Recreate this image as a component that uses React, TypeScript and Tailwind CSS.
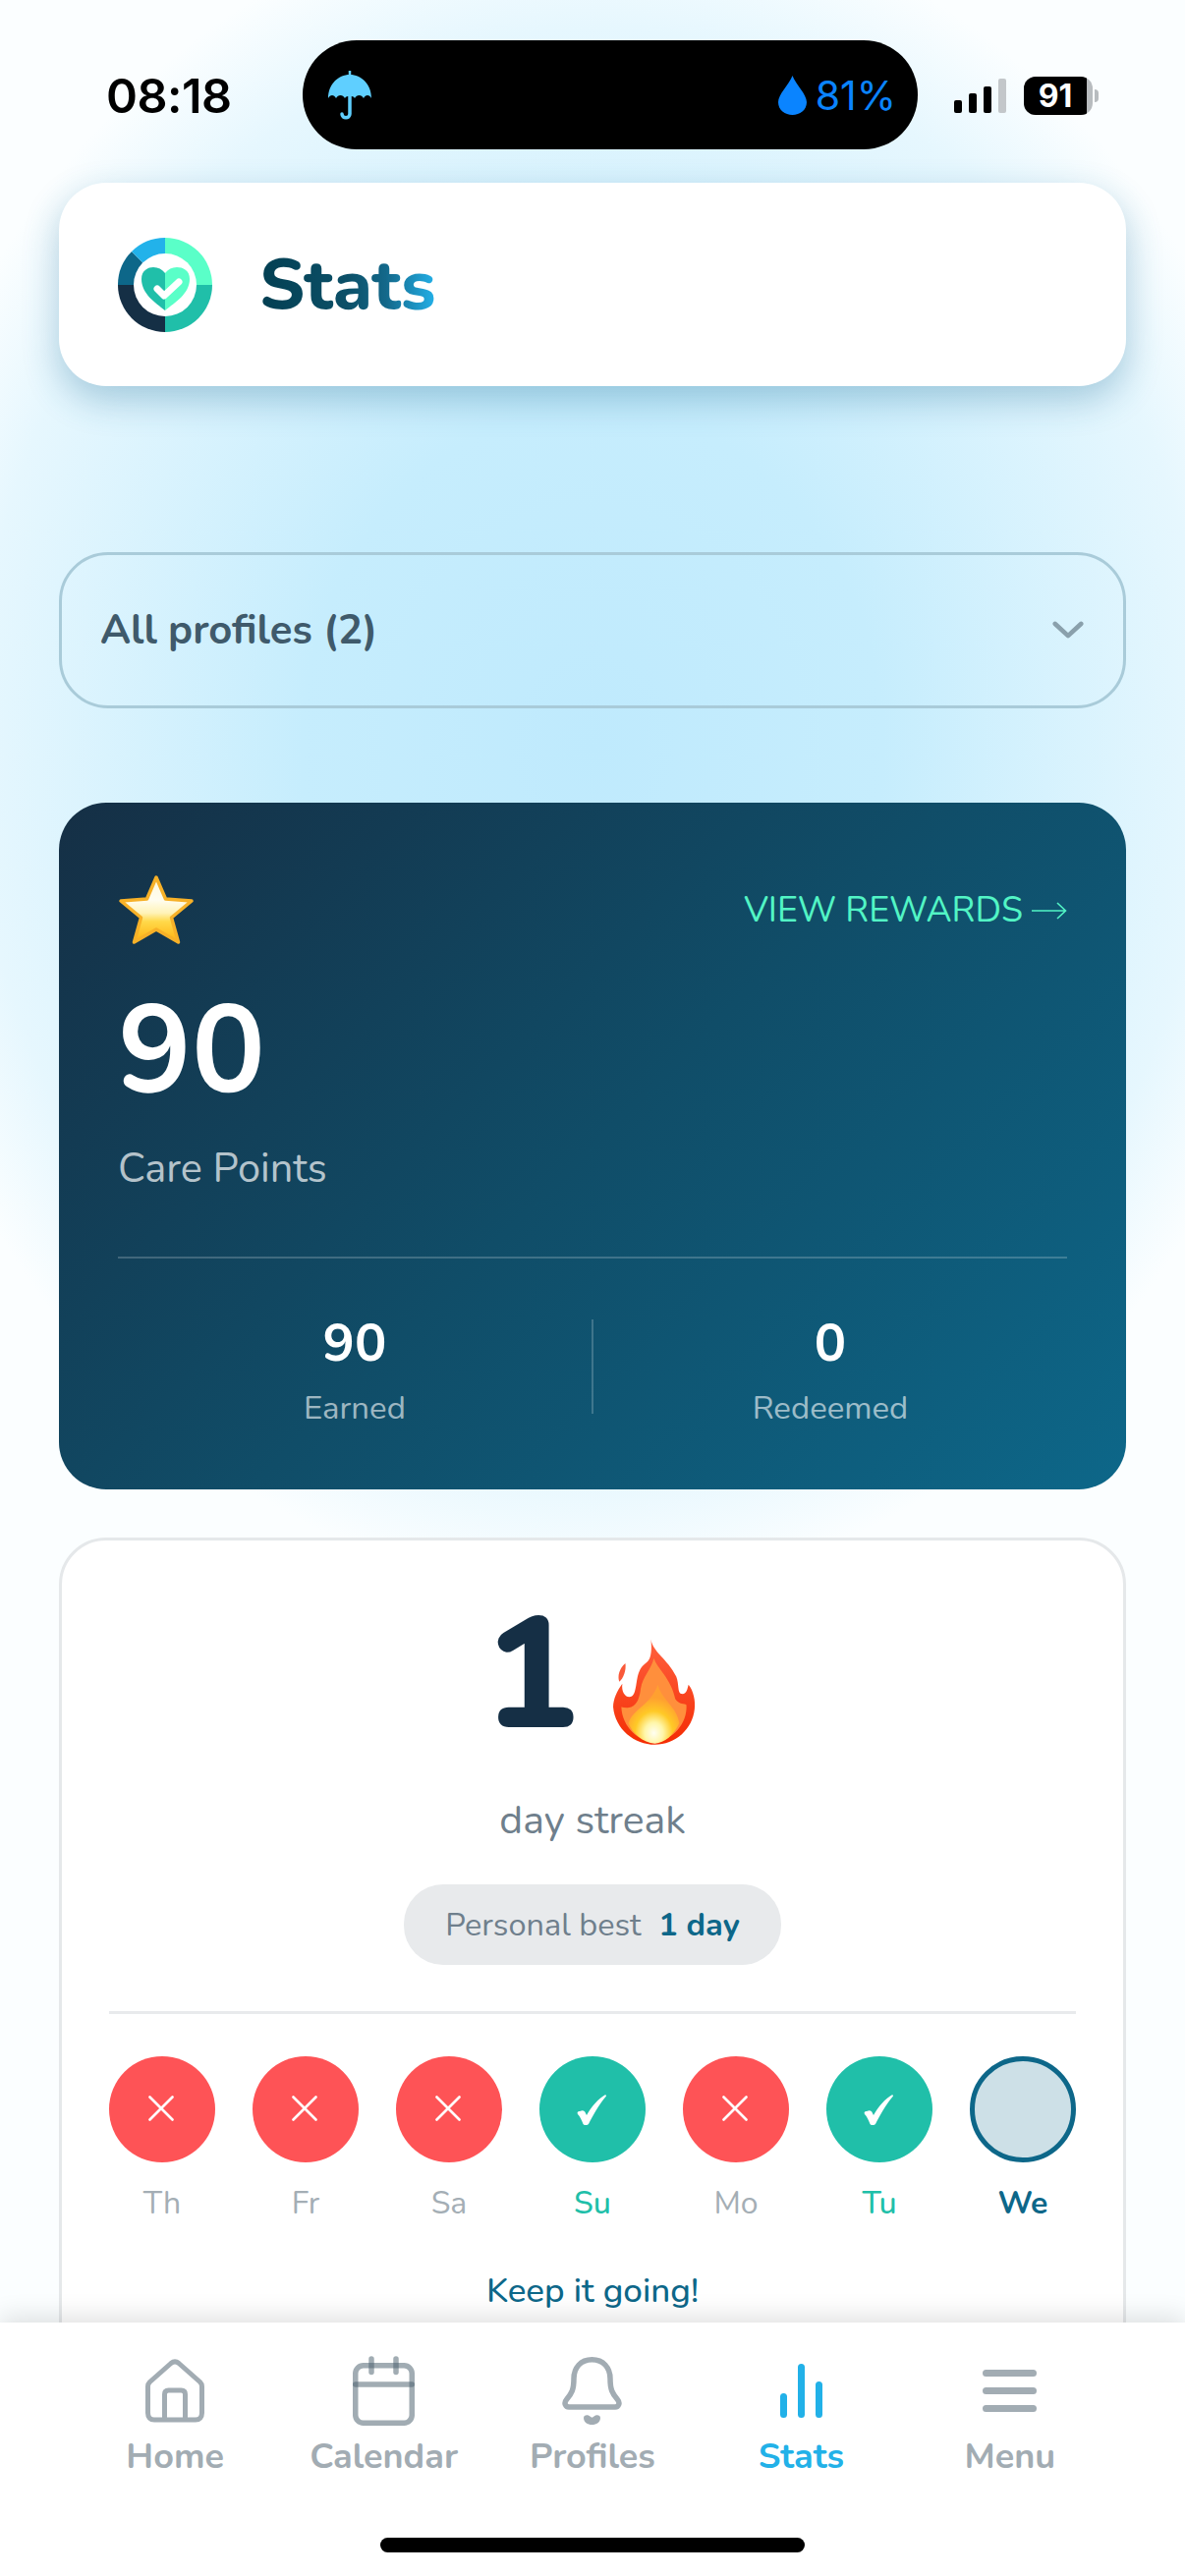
import React from "react";

const font = "font-['Nunito','Lato','Noto_Sans',sans-serif]";

function Logo() {
  return (
    <svg width="96" height="96" viewBox="0 0 96 96">
      <path d="M48 48V0A48 48 0 0 1 96 48Z" fill="#5affc8" />
      <path d="M48 48H96A48 48 0 0 1 48 96Z" fill="#20bfa9" />
      <path d="M48 48V96A48 48 0 0 1 0 48Z" fill="#152f45" />
      <path d="M48 48H0A48 48 0 0 1 14 14Z" fill="#0d6789" />
      <path d="M48 48L14 14A48 48 0 0 1 48 0Z" fill="#22b2ea" />
      <circle cx="48" cy="48" r="32" fill="#fff" />
      <path d="M48 74C38 66 24 57 24 42C24 33 31 30 36 30C41 30 45 32 48 36Z" fill="#20bfa9" />
      <path d="M48 74C58 66 73 57 73 42C73 33 66 30 60 30C55 30 51 32 48 36Z" fill="#5affc8" />
      <path d="M40 52L47 59L62 45" fill="none" stroke="#fff" strokeWidth="7" strokeLinecap="round" strokeLinejoin="round" />
    </svg>
  );
}

function Star() {
  return (
    <svg width="78" height="72" viewBox="0 0 78 72">
      <defs>
        <linearGradient id="starFill" x1="0" y1="0" x2="0" y2="1">
          <stop offset="0" stopColor="#fff8d8" />
          <stop offset="0.35" stopColor="#fffdf0" />
          <stop offset="0.55" stopColor="#fff3b8" />
          <stop offset="0.68" stopColor="#ffd94a" />
          <stop offset="1" stopColor="#ffb10f" />
        </linearGradient>
      </defs>
      <path
        d="M39 3L48.500 25L75 27L54.500 44L61.500 69L39 56L16.500 69L23.500 44L3 27L29.500 25Z"
        fill="url(#starFill)"
        stroke="#f7b128"
        strokeWidth="3.500"
        strokeLinejoin="round"
      />
    </svg>
  );
}

function Flame() {
  return (
    <svg width="87" height="110" viewBox="24 22 84 106">
      <defs>
        <radialGradient id="flameCore" cx="0.5" cy="0.82" r="0.6">
          <stop offset="0" stopColor="#fffef2" />
          <stop offset="0.3" stopColor="#fff6a8" />
          <stop offset="0.62" stopColor="#ffc926" />
          <stop offset="1" stopColor="#ffa030" />
        </radialGradient>
        <linearGradient id="flameOuter" x1="0" y1="0" x2="0" y2="1">
          <stop offset="0" stopColor="#ff6240" />
          <stop offset="1" stopColor="#f42c03" />
        </linearGradient>
      </defs>
      <path
        d="M62 23C64 36 78 42 87 60C90 68 88 76 92 77C97 78 98 72 99 68C104 74 106 84 105 92C103 112 86 127 66 127C46 127 27 112 25 90C25 82 29 74 34 67C33 74 36 80 41 80C47 80 47 70 49 60C51 52 54 49 58 46C63 42 63 32 62 23Z"
        fill="url(#flameOuter)"
      />
      <path
        d="M65 42C68 52 82 62 86 82C90 88 95 86 97 88C98 106 84 122 66 125C50 124 34 110 33 90C42 92 50 90 52 72C54 60 62 54 65 42Z"
        fill="#ff8f3c"
      />
      <path
        d="M69 68C72 82 88 90 90 106C84 118 76 125 66 126C54 125 44 116 40 106C44 92 62 88 69 68Z"
        fill="url(#flameCore)"
      />
      <path d="M37 47C38 54 35 62 31 65C29 60 31 52 37 47Z" fill="#f9593a" />
    </svg>
  );
}

function Day({ label, state }: { label: string; state: "miss" | "done" | "today" }) {
  const circle =
    state === "miss"
      ? "bg-[#fe5356] pr-[3px] pb-[3px]"
      : state === "done"
        ? "bg-[#20bfa9] pr-[3px]"
        : "bg-[#cde0e7] border-[5px] border-[#0d6789]";
  const text =
    state === "done"
      ? "text-[#20bfa9] font-medium"
      : state === "today"
        ? "text-[#0d6789] font-bold"
        : "text-[#a4aeb5]";
  return (
    <div className="flex flex-col items-center w-[108px]">
      <div className={`w-[108px] h-[108px] rounded-full flex items-center justify-center ${circle}`}>
        {state === "miss" && (
          <svg width="26" height="26" viewBox="0 0 26 26">
            <path d="M1.500 1.500L24.500 24.500M24.500 1.500L1.500 24.500" stroke="#fff" strokeWidth="2.600" fill="none" strokeLinecap="round" />
          </svg>
        )}
        {state === "done" && (
          <svg width="30" height="31" viewBox="0 0 30 31">
            <path d="M29.300 0L30 1.500C22 11 16 22 12 30C11 31.500 7 31.500 6.500 30C5 26 3 22 1 20C0 18 1 17 3 17C6 15.500 8 16 9 19L10 21C15 12 22 4 29.300 0Z" fill="#fff" />
          </svg>
        )}
      </div>
      <span className={`mt-[22px] text-[32px] leading-[40px] ${text}`}>{label}</span>
    </div>
  );
}

function NavItem({ label, active, children }: { label: string; active?: boolean; children: React.ReactNode }) {
  return (
    <div className="flex flex-col items-center">
      <div className="h-[72px] flex items-center justify-center">{children}</div>
      <span className={`mt-[10px] text-[36px] leading-[44px] font-bold ${active ? "text-[#22b1e8]" : "text-[#a2acb3]"}`}>
        {label}
      </span>
    </div>
  );
}

export default function App() {
  return (
    <div className={`w-[1206px] h-[2622px] overflow-hidden flex flex-col bg-white ${font}`}>
      <div className="flex-1 min-h-0 overflow-hidden bg-[radial-gradient(ellipse_740px_860px_at_50%_760px,#bfeafd_0%,#c6edfd_40%,#e6f7fe_85%,#fbfeff_100%)]">
        {/* status bar */}
        <div className="h-[186px] relative flex items-start">
          <span className="ml-[108px] mt-[70px] w-[200px] text-[48.500px] leading-[56px] font-semibold text-black font-['Inter',sans-serif] tracking-[-0.5px]">
            08:18
          </span>
          <div className="mt-[41px] w-[626px] h-[111px] rounded-[55px] bg-black flex items-center justify-between pl-[25px] pr-[22px]">
            <svg width="46" height="50" viewBox="0 0 46 50">
              <path d="M23 0V5" stroke="#5fcfff" strokeWidth="2.500" />
              <path d="M1 28C1 14 11 4 23 4C35 4 45 14 45 28C43 24 39 24 37 28C35 24 30 24 28 28C27 25 19 25 18 28C16 24 11 24 9 28C7 24 3 24 1 28Z" fill="#5fcfff" />
              <path d="M23 26V44C23 49 15 49 15 44" fill="none" stroke="#5fcfff" strokeWidth="3.500" strokeLinecap="round" />
            </svg>
            <div className="flex items-center gap-[9px]">
              <svg width="29" height="40" viewBox="0 0 29 40">
                <path d="M14.500 0C18 9 29 19 29 27C29 35 22 40 14.500 40C7 40 0 35 0 27C0 19 11 9 14.500 0Z" fill="#0a84ff" />
              </svg>
              <span className="text-[41px] leading-[48px] text-[#0a84ff] font-['Inter',sans-serif]">81%</span>
            </div>
          </div>
          <div className="ml-[37px] mt-[80px] flex items-end gap-[7px] h-[35px]">
            <div className="w-[8px] h-[13px] rounded-[2px] bg-black" />
            <div className="w-[8px] h-[20px] rounded-[2px] bg-black" />
            <div className="w-[8px] h-[27px] rounded-[2px] bg-black" />
            <div className="w-[8px] h-[35px] rounded-[2px] bg-[#c3c7ca]" />
          </div>
          <div className="ml-[18px] mt-[78px] flex items-center">
            <div className="w-[70px] h-[39px] rounded-[12px] bg-[#b8bcbf] overflow-hidden">
              <div className="w-[64px] h-[39px] bg-black flex items-center justify-center text-white text-[32px] leading-[39px] font-bold font-['Inter',sans-serif]">
                91
              </div>
            </div>
            <div className="ml-[2px] w-[4px] h-[13px] rounded-r-[4px] bg-[#b8bcbf]" />
          </div>
        </div>

        {/* header card */}
        <div className="mx-[60px] h-[207px] rounded-[48px] bg-white shadow-[0_14px_36px_rgba(30,110,150,0.32)] flex items-center pl-[60px]">
          <Logo />
          <span className="ml-[48px] text-[72px] leading-[84px] font-extrabold bg-[linear-gradient(90deg,#033f52_0%,#0c5068_50%,#13688a_72%,#23b0e8_100%)] bg-clip-text text-transparent">
            Stats
          </span>
        </div>

        {/* profile select */}
        <div className="mt-[169px] mx-[60px] h-[159px] rounded-[50px] border-[3px] border-[#a9cbd9] flex items-center justify-between pl-[39px] pr-[40px]">
          <span className="text-[41.800px] leading-[48px] font-bold text-[#3f5a6b]">All profiles (2)</span>
          <svg width="32" height="19" viewBox="0 0 34 20">
            <path d="M3 3L17 16L31 3" fill="none" stroke="#8aa0ac" strokeWidth="5" strokeLinecap="round" strokeLinejoin="round" />
          </svg>
        </div>

        {/* points card */}
        <div className="mt-[96px] mx-[60px] h-[699px] rounded-[48px] bg-[linear-gradient(135deg,#152f45_0%,#104d68_50%,#0d6789_100%)] pt-[73px] px-[60px]">
          <div className="flex items-center justify-between">
            <Star />
            <div className="flex items-center gap-[9px] text-[#52f5c5] mt-[2px]">
              <span className="text-[35.800px] leading-[44px]">VIEW REWARDS</span>
              <svg width="36" height="22" viewBox="0 0 36 22">
                <path d="M0 11H34M26 3L34.500 11L26 19" fill="none" stroke="#52f5c5" strokeWidth="1.600" />
              </svg>
            </div>
          </div>
          <div className="mt-[33px] text-[125px] leading-[150px] font-bold text-white">90</div>
          <div className="mt-[20px] text-[41.500px] leading-[50px] text-white/70">Care Points</div>
          <div className="mt-[64px] h-[2px] bg-white/20" />
          <div className="mt-[62px] flex items-start">
            <div className="flex-1 flex flex-col items-center">
              <span className="-mt-[8px] text-[54px] leading-[64px] font-bold text-white">90</span>
              <span className="mt-[15px] text-[33px] leading-[40px] text-white/60">Earned</span>
            </div>
            <div className="w-[2px] h-[96px] bg-white/20" />
            <div className="flex-1 flex flex-col items-center">
              <span className="-mt-[8px] text-[54px] leading-[64px] font-bold text-white">0</span>
              <span className="mt-[15px] text-[33px] leading-[40px] text-white/60">Redeemed</span>
            </div>
          </div>
        </div>

        {/* streak card */}
        <div className="mt-[49px] mx-[60px] h-[900px] rounded-[48px] border-[3px] border-[#e5e8ea] bg-white flex flex-col items-center px-[48px]">
          <div className="mt-[37px] h-[210px] flex items-start -ml-[4px]">
            <span className="text-[160px] leading-[200px] font-extrabold text-[#152f45]">1</span>
            <div className="ml-[34px] mt-[62px]">
              <Flame />
            </div>
          </div>
          <span className="mt-[14px] text-[41px] leading-[48px] text-[#6f7f8c]">day streak</span>
          <div className="mt-[41px] h-[82px] w-[384px] rounded-[40px] bg-[#e8eaec] flex items-center justify-center gap-[18px] text-[32.500px]">
            <span className="text-[#6f7f8c]">Personal best</span>
            <span className="font-bold text-[#0d6789]">1 day</span>
          </div>
          <div className="mt-[47px] w-full h-[3px] bg-[#e8eaec]" />
          <div className="mt-[43px] w-full flex justify-between">
            <Day label="Th" state="miss" />
            <Day label="Fr" state="miss" />
            <Day label="Sa" state="miss" />
            <Day label="Su" state="done" />
            <Day label="Mo" state="miss" />
            <Day label="Tu" state="done" />
            <Day label="We" state="today" />
          </div>
          <span className="mt-[47px] text-[35px] leading-[44px] font-medium text-[#0d6789]">Keep it going!</span>
        </div>
      </div>

      {/* tab bar */}
      <div className="relative h-[258px] shrink-0 bg-white shadow-[0_-6px_24px_rgba(0,0,0,0.12)] flex flex-col">
        <div className="mt-[33px] px-[72px] grid grid-cols-5">
          <NavItem label="Home">
            <svg width="60" height="65" viewBox="0 0 60 65" fill="none" stroke="#a2acb3" strokeWidth="5" strokeLinejoin="round">
              <path d="M2.500 28C2.500 26 3 25 4.500 23.500L26 4.500C28.500 2.500 31.500 2.500 34 4.500L55.500 23.500C57 25 57.500 26 57.500 28V55C57.500 59.500 55 62 51 62H9C5 62 2.500 59.500 2.500 55Z" />
              <path d="M19.500 62V36C19.500 33.500 21 32 23.500 32H36.500C39 32 40.500 33.500 40.500 36V62" />
            </svg>
          </NavItem>
          <NavItem label="Calendar">
            <svg width="63" height="71" viewBox="0 0 63 71" fill="none" stroke="#4b5f6e" strokeOpacity="0.52" strokeWidth="5.500" strokeLinecap="round">
              <rect x="2.750" y="9.750" width="57.500" height="58.500" rx="8" />
              <path d="M2.750 29H60.250" />
              <path d="M19 3V16.500" />
              <path d="M44 3V16.500" />
            </svg>
          </NavItem>
          <NavItem label="Profiles">
            <svg width="61" height="69" viewBox="0 0 61 69">
              <path d="M30.500 2.750C19 2.750 12 11 12 22C12 33 10 37 4.500 43.500C1.500 47 3.500 51 7 51H54C57.500 51 59.500 47 56.500 43.500C51 37 49 33 49 22C49 11 42 2.750 30.500 2.750Z" fill="none" stroke="#a2acb3" strokeWidth="5.500" strokeLinejoin="round" />
              <path d="M22 62C22 58.500 26.500 58.500 28.500 60.500C30 62 31 62 32.500 60.500C34.500 58.500 39 58.500 39 62C39 66.500 35 69 30.500 69C26 69 22 66.500 22 62Z" fill="#a2acb3" />
            </svg>
          </NavItem>
          <NavItem label="Stats" active>
            <svg width="43" height="55" viewBox="0 0 43 55" fill="none" stroke="#22b1e8" strokeWidth="7" strokeLinecap="round">
              <path d="M3.500 33.500V51.500M21.500 3.500V51.500M39.500 21.500V51.500" />
            </svg>
          </NavItem>
          <NavItem label="Menu">
            <svg width="55" height="43" viewBox="0 0 55 43" fill="none" stroke="#a2acb3" strokeWidth="7" strokeLinecap="round">
              <path d="M3.500 3.500H51.500M3.500 21.500H51.500M3.500 39.500H51.500" />
            </svg>
          </NavItem>
        </div>
        <div className="mt-auto mb-[24px] mx-auto w-[432px] h-[15px] rounded-full bg-black" />
      </div>
    </div>
  );
}
